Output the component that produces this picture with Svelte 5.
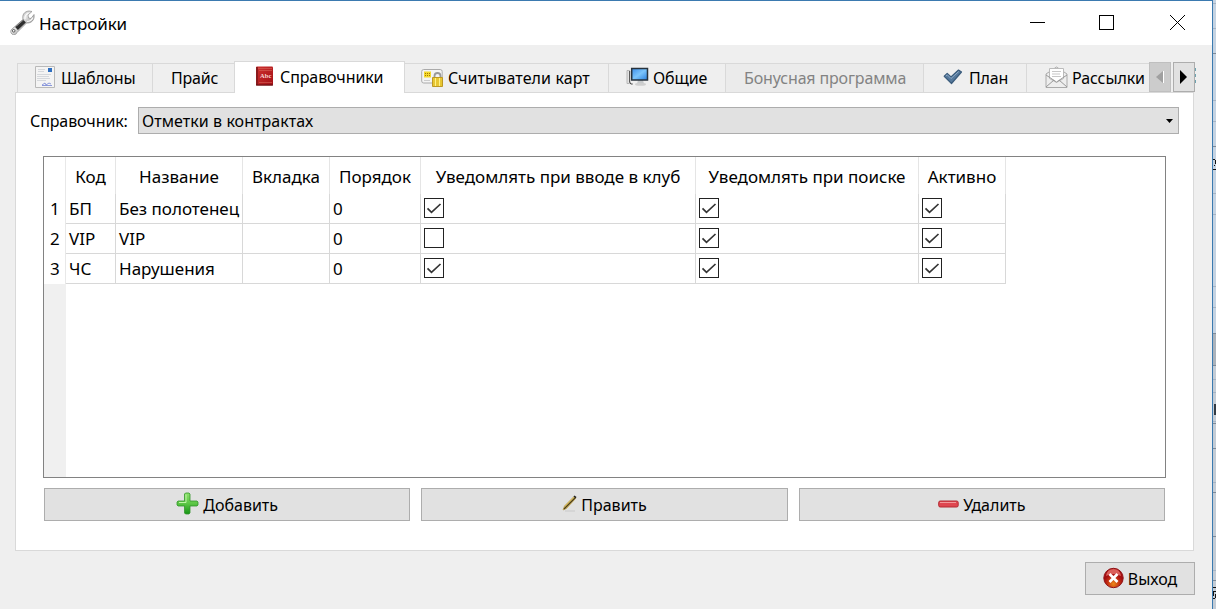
<script>
  const tabs = [
    { icon: 'doc', label: 'Шаблоны', width: 136, pad: 17, gap: 6, ls: -0.22 },
    { icon: '', label: 'Прайс', width: 82, pad: 18, gap: 0, ls: -0.2 },
    { icon: 'book', label: 'Справочники', width: 171, pad: 20, gap: 5, ls: -0.1, active: true },
    { icon: 'card', label: 'Считыватели карт', width: 204, pad: 16, gap: 4, ls: 0.1 },
    { icon: 'screen', label: 'Общие', width: 117, pad: 17, gap: 4, ls: -0.1 },
    { icon: '', label: 'Бонусная программа', width: 198, pad: 18, gap: 0, ls: -0.15, off: true },
    { icon: 'tick', label: 'План', width: 103, pad: 19, gap: 6, ls: -0.2 },
    { icon: 'mail', label: 'Рассылки', width: 126, pad: 18, gap: 4, ls: -0.1 }
  ];
  const columns = ['Код', 'Название', 'Вкладка', 'Порядок', 'Уведомлять при вводе в клуб', 'Уведомлять при поиске', 'Активно'];
  const rows = [
    ['БП', 'Без полотенец', '', '0', true, true, true],
    ['VIP', 'VIP', '', '0', false, true, true],
    ['ЧС', 'Нарушения', '', '0', true, true, true]
  ];
  const ticks = [3, 28, 53, 100, 121, 146, 193, 214, 286, 307, 333, 365, 379, 392, 421, 448, 482, 492, 536, 570, 580];
  const dark = [53, 146, 333, 365, 423, 448, 492, 536, 580];
</script>

<div class="desktop">
  <main class="window">
    <header>
      <svg class="wrench" width="25" height="25" viewBox="0 0 25 25">
        <defs><linearGradient id="steel" x1="0" y1="0" x2="1" y2="1"><stop offset="0" stop-color="#8f8f8f" /><stop offset=".45" stop-color="#e6e6e6" /><stop offset="1" stop-color="#555" /></linearGradient></defs>
        <path d="M2 19 13 9.500C12 5 14 1.500 19 1L22 1.500 18 5 18.500 8 21 8.500 24 4.500C25 9.500 21.500 13.500 16.500 13L7 22.500A3.200 3.200 0 1 1 2 19Z" fill="url(#steel)" stroke="#8a8a8a" stroke-width=".7" />
        <path d="m6.500 18.500 8-7.500" stroke="#2e2e2e" stroke-width="4" /><path d="m6.500 16 7.500-6.500" stroke="#8d8d8d" />
        <path d="M15 9q-.500-4 3.500-6M17 11.500q4 0 6-4" fill="none" stroke="#fafafa" stroke-width="1.200" />
        <circle cx="3.700" cy="20.800" r="1.300" fill="#fff" stroke="#555" />
      </svg>
      <h1>Настройки</h1>
      <svg class="controls" width="158" height="20" viewBox="0 0 158 20" fill="none" stroke="#000" shape-rendering="crispEdges">
        <path d="M0 10.500h15M69.500 3.500h14v14h-14z" /><path d="m140 3 15 15m0-15-15 15" shape-rendering="auto" />
      </svg>
    </header>

    <div class="tabs">
      {#each tabs as t}
        <div class="tab" class:active={t.active} class:off={t.off} style="width:{t.width}px;padding-left:{t.pad}px;gap:{t.gap}px;letter-spacing:{t.ls}px">
          {#if t.icon === 'doc'}
            <svg class="up" width="20" height="22" viewBox="0 0 20 22"><path d="M.5.5h19v21H.5z" fill="#f4f4f4" stroke="#b9b9b9" /><path d="M13 2h4v4h-4z" fill="#2f6fc0" /><path d="M3 3.500h7M3 5.500h6M2 8.500h14M2 10.500h12M2 12.500h13M2 14.500h9" stroke="#d5d8dc" /><path d="m7 19 3-2 1 2 3-2 2 1M7 19.500h10" fill="none" stroke="#7182d5" stroke-width=".8" /></svg>
          {:else if t.icon === 'book'}
            <svg class="up" width="20" height="20" viewBox="0 0 20 20"><defs><linearGradient id="red" x2="1" y2="1"><stop stop-color="#d0322f" /><stop offset="1" stop-color="#a20f16" /></linearGradient></defs><rect x="1" y=".5" width="17" height="19" rx="1" fill="url(#red)" /><path d="M2 1v18" stroke="#8a1a1d" stroke-width="2" /><path d="M3 2.500h14M4 4.500h13M4 16.500h13" stroke="#d66459" stroke-width=".6" /><path d="M1 19h17" stroke="#5d1015" /><text x="10.700" y="12" font-size="6.500" font-family="Liberation Serif, serif" font-weight="bold" letter-spacing="0" text-anchor="middle" fill="#f7d7d3">Abc</text></svg>
          {:else if t.icon === 'card'}
            <svg width="23" height="20" viewBox="0 0 23 20"><rect x=".7" y="1.500" width="20.500" height="13.500" rx="2" fill="#f4f4f4" stroke="#aaa" /><path d="M3 3.500h7v6H3z" fill="#f4d92c" /><path d="M4 5.500h1m1 0h1m1 0h1M4 7.500h1m1 0h1m1 0h1" stroke="#a87900" /><path d="M3 12.500h6" stroke="#ccc" /><path d="M13.500 10V8q0-3 3-3t3 3v2" fill="none" stroke="#999" stroke-width="1.800" /><path d="M11.500 9.500h10v9h-10z" fill="#e7c632" stroke="#bd9823" /><path d="M14.500 10v8m4-8v8" stroke="#fff188" /></svg>
          {:else if t.icon === 'screen'}
            <svg class="up" width="23" height="20" viewBox="0 0 23 20"><defs><linearGradient id="blue" x2="1" y2="1"><stop stop-color="#3c8de8" /><stop offset=".5" stop-color="#7cc4fb" /><stop offset="1" stop-color="#277ede" /></linearGradient></defs><path d="M1 3.500h2.500v13H1z" fill="#e3e3e3" stroke="#aaa" stroke-width=".8" /><path d="M3.700 4v11q.8 3 3 2" fill="none" stroke="#444" /><path d="M12 13h5l1 4h-7z" fill="#c5c8ca" /><ellipse cx="14.500" cy="17.300" rx="5.500" ry="1.500" fill="#cfcfcf" /><path d="M5.700 1.500h15.800v11.500H5.700z" fill="url(#blue)" stroke="#27323c" stroke-width="1.500" /></svg>
          {:else if t.icon === 'tick'}
            <svg width="20" height="20" viewBox="0 0 20 20"><path d="m1.200 8.300 3-2.800 3.800 3.500L15.500 2l3 2L8.500 15.500Z" fill="#56799c" stroke="#3b5c7c" stroke-width="1.200" stroke-linejoin="round" /><path d="m2.700 8 1.600-1.200L8 10.500l7.700-7" fill="none" stroke="#8fabc7" /></svg>
          {:else if t.icon === 'mail'}
            <svg class="up" width="23" height="23" viewBox="0 0 23 23"><path d="M1 8 11.500 1 22 8v13.500H1z" fill="#eee" stroke="#aaa" /><path d="M4.500 2.500h14v10l-7 4-7-4z" fill="#fff" stroke="#bbb" /><path d="M7 5.500h9M7 8h8M7 10.500h9" stroke="#c7c7c7" /><path d="m1 9 10.500 7L22 9M1 21l8-7m13 7-8-7" fill="none" stroke="#999" /></svg>
          {/if}
          <span>{t.label}</span>
        </div>
      {/each}
      <button class="scroll prev" aria-label="Назад"><svg width="8" height="14"><path d="M7 1v12L0 7z" fill="#a0a0a0" /><path d="M7.500 1v12" stroke="#fff" /></svg></button>
      <button class="scroll next" aria-label="Вперёд"><svg width="8" height="14"><path d="M0 0v14l7-7z" fill="#000" /></svg></button>
      <i class="peek"></i>
    </div>

    <section class="panel">
      <div class="field">
        <span class="caption">Справочник:</span>
        <div class="combo"><span>Отметки в контрактах</span><svg width="7" height="4"><path d="M0 0h7L3.500 4z" /></svg></div>
      </div>
      <div class="grid">
        <div class="row head"><b></b>{#each columns as c}<div><span>{c}</span></div>{/each}</div>
        {#each rows as r, n}
          <div class="row">
            <b>{n + 1}</b>
            {#each r as v}
              <div>{#if typeof v === 'boolean'}<svg class="box" width="20" height="20" viewBox="0 0 20 20" fill="none" stroke="#222"><path d="M.5.5h19v19H.5z" shape-rendering="crispEdges" />{#if v}<path d="m3.500 10.300 4 4 9-8.300" stroke-width="1.700" stroke="#333" />{/if}</svg>{:else}<span>{v}</span>{/if}</div>
            {/each}
          </div>
        {/each}
        <div class="rest"></div>
      </div>
      <div class="actions">
        <button>
          <svg class="up" width="23" height="23" viewBox="0 0 23 23"><defs><linearGradient id="green" x2="0" y2="1"><stop stop-color="#8de06b" /><stop offset=".5" stop-color="#5cc645" /><stop offset="1" stop-color="#159414" /></linearGradient></defs><path d="M9.500 1h3.500l1 1v7h7l1 1v3l-1 1h-7v7l-1 1H9.500l-1-1v-7H2l-1-1v-3l1-1h6.500V2z" fill="url(#green)" stroke="#32962b" stroke-width=".8" /><path d="M10 2.500v8H3" fill="none" stroke="#c0f5a7" /></svg>
          <span>Добавить</span>
        </button>
        <button>
          <svg class="up" width="15" height="17" viewBox="0 0 15 17"><path d="M3 16h10" stroke="#c9c9c9" /><path d="m1 15 1.500-4L12 1.500 14 3 4.500 13.500Z" fill="#e3c65b" stroke="#ad8e3c" stroke-width=".6" /><path d="m2 14 11-11" stroke="#4a3d1f" stroke-width="1.200" /><path d="m11.500 1.500 1-1L14.500 2l-1 1.500z" fill="#222" /></svg>
          <span>Править</span>
        </button>
        <button>
          <svg class="up" width="21" height="8" viewBox="0 0 21 8"><rect x=".7" y="1" width="19.500" height="6" rx="1.500" fill="#df4650" stroke="#b32a32" /><path d="M2 2.500h16" stroke="#f1999b" /></svg>
          <span>Удалить</span>
        </button>
      </div>
    </section>
    <button class="exit">
      <svg class="up" width="21" height="22" viewBox="0 0 21 22"><defs><radialGradient id="ball" cy=".8"><stop stop-color="#ec8a18" /><stop offset=".6" stop-color="#c53212" /><stop offset="1" stop-color="#a50d10" /></radialGradient></defs><circle cx="10.500" cy="11" r="9.700" fill="url(#ball)" stroke="#8f1014" /><path d="M3 9q1-7 7.500-7T18 9Q10 5 3 9" fill="#ed7b73" opacity=".75" /><path d="m6.500 7 8 8m0-8-8 8" stroke="#fff" stroke-width="2.700" /></svg>
      <span>Выход</span>
    </button>
  </main>
  <svg class="behind" width="3" height="609" viewBox="0 0 3 609" shape-rendering="crispEdges">
    <path d="M0 0h3v609H0z" fill="#c5d3e2" /><path d="M0 333h3v32H0z" fill="#acb3bb" /><path d="M0 365h3v244H0z" fill="#c4ccd5" />
    {#each ticks as y}<path d="M0 {y}.5h3" stroke="#a6b4c4" />{/each}
    {#each dark as y}<path d="M0 {y}.5h3" stroke="#7f8b99" />{/each}
    <path d="M0 159.500h2M2.500 160v4M1 165.500h1M0 169.500h3" stroke="#111" /><path d="M1 404h2v11H1z" fill="#333b44" /><path d="M0 587.500h3M0 591.500h3M.5 592v4M0 598.500h2M2.500 594v4" stroke="#111" />
  </svg>
</div>

<style>
  :global(body) { margin: 0; overflow: hidden; }
  * { box-sizing: border-box; }
  svg { display: block; flex: none; }
  span { white-space: nowrap; }
  .desktop { display: flex; width: 1216px; height: 609px; font: 16px/22px "Noto Sans", sans-serif; color: #000; }
  .window { width: 1213px; height: 609px; background: #efefef; border-top: 1px solid #3b7ab0; border-right: 1px solid #3b7ab0; display: flex; flex-direction: column; }
  header { height: 44px; background: #fff; display: flex; flex: none; align-items: flex-start; padding: 9px 24px 0 10px; }
  h1 { margin: 3px 0 0 4px; font: 17px/22px "Noto Sans", sans-serif; letter-spacing: -0.1px; }
  .controls { margin: 2px 0 0 auto; }
  .up { margin-bottom: 2px; }
  .tabs { position: relative; height: 32px; margin: 16px 0 -1px 17px; flex: none; display: flex; align-items: flex-end; width: 1178px; z-index: 1; }
  .tab { height: 30px; flex: none; border: 1px solid #d9d9d9; border-left: 0; display: flex; align-items: center; }
  .tab:first-child { border-left: 1px solid #d9d9d9; }
  .tab:nth-child(2) { border-right: 0; }
  .tab.active { height: 32px; background: #fff; border: 1px solid #d9d9d9; border-bottom: 0; padding-bottom: 2px; margin-left: -1px; }
  .tab:nth-child(8) { border-right: 0; }
  .off { background: #ebebeb; color: #838383; }
  .scroll { position: absolute; top: 1px; width: 22px; height: 30px; border: 1px solid #adadad; background: #e1e1e1; padding: 0 0 0 6px; justify-content: flex-start; }
  .prev { left: 1132px; background: #ccc; border-color: #bfbfbf; }
  .next { left: 1156px; }
  .peek { position: absolute; left: 1178px; top: 7px; width: 1px; height: 17px; background: repeating-linear-gradient(#6ea3b0 0 3px, #efefef 3px 6px); }
  .panel { width: 1179px; height: 459px; margin-left: 15px; background: #fff; border: 1px solid #d9d9d9; padding: 14px 14px 0; flex: none; }
  .field { display: flex; height: 27px; align-items: center; }
  .caption { width: 108px; letter-spacing: -0.1px; }
  .combo { flex: 1; height: 27px; display: flex; align-items: center; justify-content: space-between; border: 1px solid #adadad; background: #e1e1e1; padding: 0 5px 0 3px; letter-spacing: 0.06px; }
  .grid { width: 1123px; height: 322px; margin: 22px 0 0 13px; border: 1px solid #828282; display: flex; flex-direction: column; font: 17px/22px "Noto Sans", sans-serif; }
  .row { display: grid; grid-template-columns: 22px 50px 127px 87px 91px 275px 223px 87px; height: 30px; flex: none; }
  .row > div { border-right: 1px solid #d8d8d8; border-bottom: 1px solid #d8d8d8; padding: 4px 0 0 3px; }
  .row b { font-weight: normal; padding: 4px 0 0 6px; border-right: 1px solid #e8e8e8; }
  .row.head { height: 37px; }
  .row.head > div { border-bottom: 0; border-color: #e5e5e5; display: flex; justify-content: center; padding: 9px 0 0; }
  .box { margin-top: 0; }
  .rest { flex: 1; width: 22px; background: #f0f0f0; }
  .actions { display: flex; gap: 11px; margin: 10px 0 0 14px; width: 1121px; }
  button { height: 33px; flex: 1; border: 1px solid #adadad; background: #e1e1e1; display: flex; align-items: center; justify-content: center; gap: 4px; padding: 0; font: 16px/22px "Noto Sans", sans-serif; color: #000; }
  .exit { width: 110px; flex: none; margin: 11px 0 0 1085px; }
  .behind { margin: 0; }
</style>
